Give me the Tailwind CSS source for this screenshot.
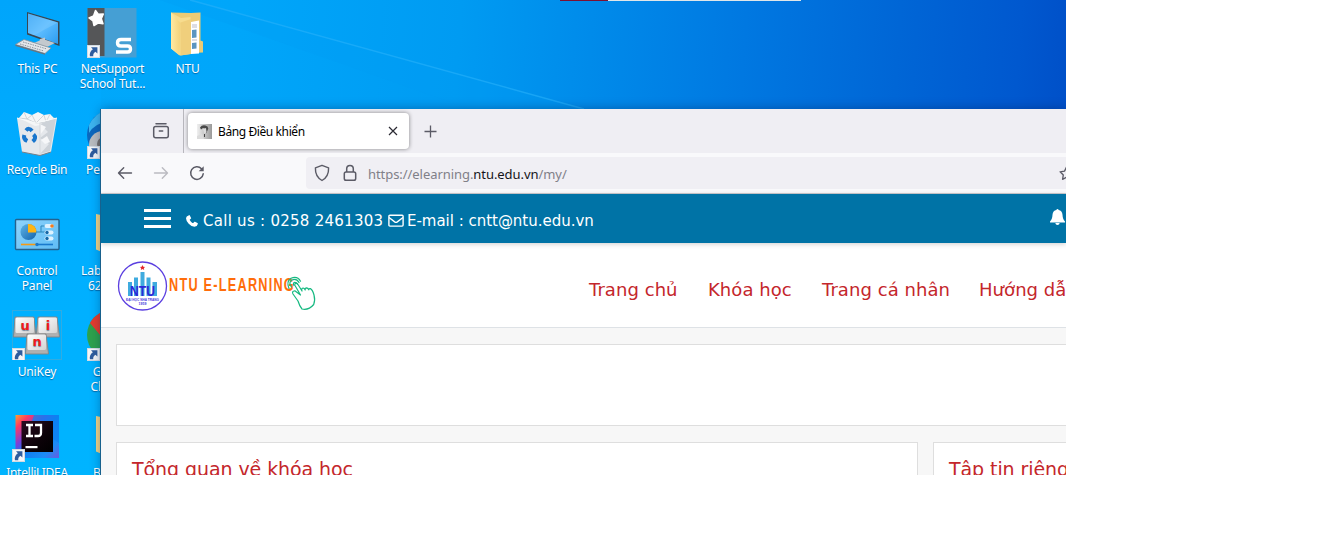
<!DOCTYPE html>
<html lang="vi">
<head>
<meta charset="utf-8">
<title>Bảng Điều khiển</title>
<script src="https://cdn.jsdelivr.net/npm/@tailwindcss/browser@4"></script>
</head>
<body class="bg-white w-[1338px] h-[548px] overflow-hidden">
<svg class="absolute" width="0" height="0">
  <defs>
    <linearGradient id="scr" x1="0" y1="0" x2="1" y2="1"><stop offset="0" stop-color="#2f9ff2"/><stop offset=".5" stop-color="#5cbcff"/><stop offset="1" stop-color="#2b9cf0"/></linearGradient>
    <linearGradient id="fold" x1="0" y1="0" x2="1" y2="0"><stop offset="0" stop-color="#ffe9a2"/><stop offset="1" stop-color="#f3d27a"/></linearGradient>
    <linearGradient id="cp" x1="0" y1="0" x2="1" y2="1"><stop offset="0" stop-color="#8fd3fb"/><stop offset="1" stop-color="#5fbdf5"/></linearGradient>
    <linearGradient id="pie" x1="0" y1="0" x2="1" y2="1"><stop offset="0" stop-color="#5fb4e6"/><stop offset="1" stop-color="#1263ad"/></linearGradient>
    <linearGradient id="ij" x1="0" y1="0" x2="1" y2="1"><stop offset="0" stop-color="#ffa02e"/><stop offset=".16" stop-color="#fe3a62"/><stop offset=".36" stop-color="#7b3fd8"/><stop offset=".5" stop-color="#0a7cf0"/><stop offset=".8" stop-color="#1c8cf5"/><stop offset="1" stop-color="#6a5ae0"/></linearGradient>
    <linearGradient id="ijb" x1="0" y1="0" x2="1" y2="1"><stop offset="0" stop-color="#2a0a22"/><stop offset=".6" stop-color="#0c0208"/><stop offset="1" stop-color="#000"/></linearGradient>
    <linearGradient id="key" x1="0" y1="0" x2="1" y2="1"><stop offset="0" stop-color="#fff"/><stop offset="1" stop-color="#d4d4d4"/></linearGradient>
    <linearGradient id="fav" x1="0" y1="0" x2="1" y2="0"><stop offset="0" stop-color="#f0f0f0"/><stop offset="1" stop-color="#9a9a9a"/></linearGradient>
    <symbol id="shortcut" viewBox="0 0 13 13"><rect width="13" height="13" fill="#f4f6f8"/><rect x=".5" y=".5" width="12" height="12" fill="none" stroke="#d3dbe2"/><path d="M4 2.300h6.400v6.300L8.400 6.700C6.600 8 6 9.300 6.300 11.200H2.900C2.300 8.400 3.600 5.800 5.900 4.200z" fill="#2f5d9e"/></symbol>
  </defs>
</svg>

<main class="relative w-[1066px] h-[475px] overflow-hidden bg-[#00acfb] font-['Noto_Sans',sans-serif]">
  <!-- wallpaper -->
  <div class="absolute inset-0 bg-[linear-gradient(94deg,#00a9fb_0%,#00a6fa_22%,#009bf2_42%,#008bea_54%,#0078e1_68%,#0066d6_82%,#0058cf_93%,#004cc5_100%)]"></div>
  <div class="absolute inset-y-0 left-0 w-[101px] bg-[linear-gradient(180deg,#00a5fb_0%,#00adff_40%,#00b4ff_100%)]"></div>
  <svg class="absolute left-0 top-0" width="620" height="109" viewBox="0 0 620 109"><path d="M190 0L582 109H470L160 0z" fill="#009cf3" opacity=".25"/><path d="M190 0L584 109" stroke="#28b2fb" stroke-width="1.600" opacity=".6"/></svg>
  <div class="absolute left-[560px] top-0 flex h-px w-[241px] bg-[#dfe6e9]"><div class="w-[48px] bg-[#7c1032]"></div></div>

  <!-- desktop icons -->
  <div class="absolute left-0 top-[8px] w-[74px] flex flex-col items-center gap-[3px] text-white text-[12px] tracking-[-0.12px] leading-[15px] text-center whitespace-nowrap [text-shadow:0_1px_1px_rgba(0,40,90,.5)]">
    <svg width="50" height="50" viewBox="0 0 50 50"><path d="M15 4L47.500 13.500V38L15 26.500z" fill="#3a4650"/><path d="M16 5.500L46 14.500V36L16 25z" fill="url(#scr)"/><path d="M16 5.500L46 14.500L22 27.200L16 25z" fill="#8cd0ff" opacity=".35"/><path d="M28 31l5-1.500v3l-6 2zM22 35l9-4l12 4l-8 4z" fill="#c3c9ce"/><path d="M3.500 36.500L12 31.500L39 40L33 45.500z" fill="#e4e7ea" stroke="#87919a" stroke-width=".8"/><path d="M8 36l24 7M11 34l24 7" stroke="#8a949d" stroke-width="1" stroke-dasharray="1.500 1"/><path d="M3.500 36.500L33 45.500v1.300L3.500 38z" fill="#69747d"/></svg>
    <span class="pl-px">This PC</span>
  </div>
  <div class="absolute left-[75px] top-[8px] w-[75px] flex flex-col items-center gap-[3px] text-white text-[12px] tracking-[-0.2px] leading-[15px] text-center whitespace-nowrap [text-shadow:0_1px_1px_rgba(0,40,90,.5)]">
    <svg class="-ml-px" width="50" height="50" viewBox="0 0 50 50"><rect x=".5" width="49" height="49.500" fill="#459fd4"/><rect x=".5" width="17" height="48" fill="#555658"/><path d="M8.500 2.500l2.800 3.800 5-.3-2 4.700 1.700 5-5-.7-4 2.500-1-4.500-4-3 4.500-2z" fill="#fff" stroke="#fff" stroke-width="1.500" stroke-linejoin="round"/><path d="M44 31.500H34q-3.500 0-3.500 3.200t3.500 3.300h6.500q3 0 3 3t-3 3H29" fill="none" stroke="#fff" stroke-width="3.400"/><use href="#shortcut" x="0" y="37" width="13" height="13"/></svg>
    <span>NetSupport<br>School Tut...</span>
  </div>
  <div class="absolute left-[150px] top-[8px] w-[74px] flex flex-col items-center gap-[3px] text-white text-[12px] tracking-[-0.12px] leading-[15px] text-center whitespace-nowrap [text-shadow:0_1px_1px_rgba(0,40,90,.5)]">
    <svg width="50" height="50" viewBox="0 0 50 50"><path d="M9 4.500l20 .5 9.500-.5v28l2.500 1v11L28 45z" fill="#eccb75"/><path d="M29 14l8-1.500v33L29 46z" fill="#fff"/><path d="M30 22l4.500-.6v8l-4.500.6zM30 35l4.500-.5v6l-4.500.5z" fill="#5b95c0"/><path d="M30 17h5M30 19h5M30 32h5" stroke="#aab" stroke-width=".8"/><path d="M9 4.500L19 10l9.500-1v37L18 47.500 9 40.500z" fill="#f7dc8f"/><path d="M9 4.500l9.500 10.500L17.500 47.500 9 40.500z" fill="url(#fold)"/><path d="M18.500 14.500L29 11v35l-10.500 1.500z" fill="#f0cf7c"/></svg>
    <span class="pl-px">NTU</span>
  </div>
  <div class="absolute left-0 top-[109px] w-[74px] flex flex-col items-center gap-[3px] text-white text-[12px] tracking-[-0.25px] leading-[15px] text-center whitespace-nowrap [text-shadow:0_1px_1px_rgba(0,40,90,.5)]">
    <svg width="50" height="50" viewBox="0 0 50 50"><path d="M5 9L24 13L45 9L39 43L28 46.500L10 43z" fill="#e5e8ec"/><path d="M7 9l5-6 8 3 6-3 6 3 6-1 5 5-8 5-12 2z" fill="#f5f6f7"/><path d="M12 3l3 7 5-4 4 8 8-8 2 7 4-8M7 9l8 1 9 4 11-1 8-4" fill="none" stroke="#c6cbd1" stroke-width=".8"/><path d="M28 15l8 8-8 6 9 6-9 10 10-3 6-33z" fill="#cdd2d8"/><path d="M28 15l6 3-6 8zM29 31l6-4 3 6-5 2z" fill="#f6f7f9"/><path d="M28 14v32" stroke="#d4d8dc"/><path d="M5 9l19 5 21-5" fill="none" stroke="#f8fafb"/><g fill="none" stroke="#1976cd" stroke-width="4"><path d="M14 21.500q3-3.500 6 .5"/><path d="M12.300 26q-1.300 4 3 6"/><path d="M21.500 25.500q3.500 3.500-.8 7"/></g><path d="M10 43l18 3.500 11-3.500" fill="none" stroke="#777f88" stroke-width="1"/></svg>
    <span>Recycle Bin</span>
  </div>
  <div class="absolute left-0 top-[210px] w-[74px] flex flex-col items-center gap-[3px] text-white text-[12px] tracking-[-0.12px] leading-[15px] text-center whitespace-nowrap [text-shadow:0_1px_1px_rgba(0,40,90,.5)]">
    <svg width="50" height="50" viewBox="0 0 50 50"><rect x="3.500" y="9.500" width="43.500" height="30" rx="1" fill="url(#cp)" stroke="#24628e" stroke-width="1.400"/><circle cx="16.500" cy="22" r="8" fill="url(#pie)"/><path d="M16 22.500V14a8 8 0 0 1 8.500 8.500z" fill="#ffb412"/><path d="M24 22h5v-6h5M29 22h4" fill="none" stroke="#2b87bd"/><rect x="32.500" y="14" width="9" height="4" rx="2" fill="#ddf2ff"/><circle cx="40" cy="16" r="1.800" fill="#f47c20"/><rect x="32.500" y="20.500" width="9" height="4" rx="2" fill="#ddf2ff"/><circle cx="35" cy="22.500" r="1.700" fill="#1569a9"/><rect x="32.500" y="26.500" width="9" height="4" rx="2" fill="#ddf2ff"/><circle cx="35" cy="28.500" r="1.700" fill="#1569a9"/><path d="M9 34.500h16" stroke="#f59b14" stroke-width="1.600"/><path d="M25 34.500h16" stroke="#1979cd" stroke-width="1.600"/><circle cx="25" cy="34.500" r="1.700" fill="#1979cd"/></svg>
    <span>Control<br>Panel</span>
  </div>
  <div class="absolute left-0 top-[310px] w-[74px] flex flex-col items-center gap-[4px] text-white text-[12px] tracking-[-0.12px] leading-[15px] text-center whitespace-nowrap [text-shadow:0_1px_1px_rgba(0,40,90,.5)]">
    <svg width="50" height="50" viewBox="0 0 50 50" font-family="'DejaVu Sans'" font-weight="700" font-size="13" fill="#f11a1a" text-anchor="middle"><rect x=".5" y=".5" width="49" height="49" fill="none" stroke="#5aa7c9" stroke-opacity=".55"/><g stroke="#858585" stroke-width=".9"><path d="M3 7h19l2 20H1.500z" fill="#b0b0b0"/><path d="M26 7h19l2.500 20H24z" fill="#b0b0b0"/><rect x="3.500" y="7.500" width="18.500" height="15.500" rx="1.500" fill="url(#key)" stroke="none"/><rect x="26.500" y="7.500" width="18.500" height="15.500" rx="1.500" fill="url(#key)" stroke="none"/><path d="M15 24h19l2.500 20H13.500z" fill="#b0b0b0"/><rect x="15.500" y="24.500" width="18.500" height="15.500" rx="1.500" fill="url(#key)" stroke="none"/></g><text x="13" y="19.500">u</text><text x="36" y="19.500">i</text><text x="25" y="36">n</text><use href="#shortcut" x="0" y="38" width="13" height="13"/></svg>
    <span>UniKey</span>
  </div>
  <div class="absolute left-0 top-[412px] w-[74px] flex flex-col items-center gap-[3px] text-white text-[12px] tracking-[-0.3px] leading-[15px] text-center whitespace-nowrap [text-shadow:0_1px_1px_rgba(0,40,90,.5)]">
    <svg width="50" height="50" viewBox="0 0 50 50"><rect x="3.500" y="3" width="43.500" height="43" fill="url(#ij)"/><path d="M22 3h25v28l-6-4V9H20z" fill="#0d83f2" opacity=".75"/><rect x="9.500" y="9" width="31.500" height="31" fill="url(#ijb)"/><path d="M14 13h7M17.500 13v11M14 24h7M23 13h6v8q0 3-3 3h-3.500" fill="none" stroke="#fff" stroke-width="2.300"/><rect x="13.500" y="34" width="12" height="2.200" fill="#fff"/><use href="#shortcut" x="0" y="37" width="13" height="13"/></svg>
    <span>IntelliJ IDEA</span>
  </div>
  <!-- icons partly covered by the browser window -->
  <div class="absolute left-[75px] top-[109px] w-[74px] flex flex-col items-center gap-[3px] text-white text-[12px] leading-[15px] whitespace-nowrap [text-shadow:0_1px_1px_rgba(0,40,90,.5)]">
    <svg width="50" height="50" viewBox="0 0 50 50"><circle cx="25" cy="26" r="25" fill="#0b67bd"/><path d="M2 16Q8 4 20 1v12Q8 14 2 24z" fill="#3db4ef"/><circle cx="16" cy="36" r="14" fill="#b9bcbf"/><circle cx="17" cy="35" r="7" fill="#76706c"/><use href="#shortcut" x="0" y="37" width="13" height="13"/></svg>
    <span class="w-[52px]">Peazip</span>
  </div>
  <div class="absolute left-[81px] top-[210px] w-[69px] flex flex-col gap-[3px] text-white text-[12px] leading-[15px] whitespace-nowrap [text-shadow:0_1px_1px_rgba(0,40,90,.5)]">
    <svg width="50" height="50" viewBox="0 0 50 50"><path d="M15 4l20 4v40L15 39.500z" fill="#f0d487"/></svg>
    <span>Lab 1<br><span class="pl-[7px]">6213</span></span>
  </div>
  <div class="absolute left-[75px] top-[311px] w-[74px] flex flex-col items-center gap-[3px] text-white text-[12px] leading-[15px] text-center whitespace-nowrap [text-shadow:0_1px_1px_rgba(0,40,90,.5)]">
    <svg width="50" height="50" viewBox="0 0 50 50"><circle cx="25" cy="24" r="25" fill="#2da14c"/><path d="M3 12A25 25 0 0 1 25-1V24H13z" fill="#e33b2e"/><circle cx="25" cy="24" r="11" fill="#fff"/><use href="#shortcut" x="0" y="37" width="13" height="13"/></svg>
    <span class="pl-[2px]">Google<br>Chrome</span>
  </div>
  <div class="absolute left-[81px] top-[412px] w-[69px] flex flex-col gap-[3px] text-white text-[12px] leading-[15px] whitespace-nowrap [text-shadow:0_1px_1px_rgba(0,40,90,.5)]">
    <svg width="50" height="50" viewBox="0 0 50 50"><path d="M15 4l20 4v40L15 39.500z" fill="#f0d487"/></svg>
    <span class="pl-[12px]">Bai tap</span>
  </div>

  <!-- browser window -->
  <section class="absolute left-[101px] top-[109px] w-[965px] h-[366px] overflow-hidden flex flex-col bg-[#f7f7f7] shadow-[-1px_0_0_#18618d,0_0_10px_rgba(0,30,80,.4)]">
    <div class="h-[44px] shrink-0 flex bg-[#efeef3] text-[#15141a]">
      <div class="w-[83px] border-r border-[#b8b7bd] flex items-center pl-[51px]">
        <svg width="18" height="18" viewBox="0 0 18 18" fill="none" stroke="#5b5b66" stroke-width="1.500" stroke-linecap="round"><path d="M4 1.700h10"/><rect x="1.700" y="4.600" width="14.600" height="11.200" rx="2"/><path d="M7.300 9h3.400"/></svg>
      </div>
      <div class="ml-[4px] mt-[4px] w-[221px] h-[36px] rounded bg-white shadow-[0_0_4px_rgba(0,0,0,.45)] flex items-center pl-[9px] pr-[11px]">
        <svg class="mt-px" width="15" height="15" viewBox="0 0 15 15"><rect width="15" height="15" fill="url(#fav)"/><path d="M3 3.500q2-3 5.500-2l2 1 .8 2-.8 2-1.500 3-.5-4.500-2.500-1-2 1.500z" fill="#4a4a4a"/><path d="M6 5l3-1 .5 4-2 2z" fill="#ddd"/><path d="M0 12l5-2 2 5H0z" fill="#dcdcdc"/><path d="M7.500 10v3" stroke="#444"/></svg>
        <span class="ml-[6px] mt-[2px] w-[100px] text-[12px] leading-[16px] tracking-[-0.45px] whitespace-nowrap text-black"><span class="tracking-[-0.4px]">Bảng Điều khiển</span></span>
        <svg class="ml-auto" width="10" height="10" viewBox="0 0 10 10" stroke="#2b2a33" stroke-width="1.200"><path d="M1 1l8 8M9 1L1 9"/></svg>
      </div>
      <div class="flex items-center pl-[15px]"><svg width="13" height="13" viewBox="0 0 13 13" stroke="#5b5b66" stroke-width="1.300"><path d="M6.500 .5v12M.5 6.500h12"/></svg></div>
    </div>
    <div class="h-[41px] shrink-0 flex items-center bg-[#f9f9fb] border-b border-[#ccccd0]">
      <svg class="ml-[16px]" width="16" height="16" viewBox="0 0 16 16" fill="none" stroke="#5b5b66" stroke-width="1.400" stroke-linecap="round" stroke-linejoin="round"><path d="M14.500 8H1.700M6.700 2.800L1.500 8l5.200 5.200"/></svg>
      <svg class="ml-[20px]" width="16" height="16" viewBox="0 0 16 16" fill="none" stroke="#bbbbc1" stroke-width="1.400" stroke-linecap="round" stroke-linejoin="round"><path d="M1.500 8h12.800M9.300 2.800L14.500 8l-5.200 5.200"/></svg>
      <svg class="ml-[20px]" width="16" height="16" viewBox="0 0 16 16" fill="none" stroke="#5b5b66" stroke-width="1.500" stroke-linecap="round"><path d="M14.200 8.800A6.300 6.300 0 1 1 12.500 3.700"/><path d="M14.700 1.200v5h-5z" fill="#5b5b66" stroke="none"/></svg>
      <div class="ml-[101px] h-[32px] flex-1 rounded-l bg-[#f0eff4] flex items-center">
        <svg class="ml-[8px]" width="16" height="18" viewBox="0 0 16 18" fill="none" stroke="#5b5b66" stroke-width="1.400" stroke-linejoin="round"><path d="M8 1.300l6.600 2.500c.2 5.700-1 9.700-6.600 12.700C2.400 13.500 1.200 9.500 1.400 3.800z"/></svg>
        <svg class="ml-[13px]" width="14" height="18" viewBox="0 0 14 18" fill="none" stroke="#5b5b66" stroke-width="1.500"><rect x="1.300" y="8" width="11.400" height="8.200" rx="1.800"/><path d="M3.700 8V4.700a3.300 3.300 0 0 1 6.600 0V8"/></svg>
        <span class="ml-[11px] mt-[2px] text-[13px] tracking-[-0.06px] leading-[20px] text-[#808088] whitespace-nowrap">https://elearning.<span class="text-[#15141a]">ntu.edu.vn</span>/my/</span>
        <svg class="ml-auto -mr-[8px] shrink-0" width="15" height="15" viewBox="0 0 16 16" fill="none" stroke="#5b5b66" stroke-width="1.400" stroke-linejoin="round"><path d="M8 1.200l2.100 4.300 4.700.7-3.400 3.300.8 4.700L8 12l-4.200 2.200.8-4.700L1.200 6.200l4.700-.7z"/></svg>
      </div>
    </div>

    <header class="relative z-10 h-[49px] shrink-0 flex items-center bg-[#0073a6] pt-[4px] pl-[43px] text-white font-['DejaVu_Sans',sans-serif] text-[15px] whitespace-nowrap shadow-[0_1px_5px_rgba(0,0,0,.2)]">
      <div class="w-[27px] -mt-[5px] flex flex-col gap-[5px]"><i class="h-[3px] bg-white"></i><i class="h-[3px] bg-white"></i><i class="h-[3px] bg-white"></i></div>
      <svg class="ml-[15px]" width="12" height="12" viewBox="0 0 12 12" fill="#fff"><path d="M3 .2q.5-.3.8.3l1.300 2.400q.2.500-.3.900l-.9.700q-.3.300 0 .8.900 1.600 2.500 2.600.5.400.9 0l.8-1q.4-.4.900-.1l2.400 1.300q.6.300.4.900-.5 2.700-3.300 2.800Q5.500 11.700 2.700 8.700 0 5.700 0 3.200 0 1.300 3 .2z"/></svg>
      <span class="ml-[5px] mt-px w-[181px] tracking-[0.27px]">Call us : 0258 2461303</span>
      <svg class="ml-[4px]" width="16" height="13" viewBox="0 0 16 13" fill="none" stroke="#fff" stroke-width="1.400"><rect x=".9" y="1.200" width="14.200" height="10.900" rx="1"/><path d="M1 3.500l5.700 4.400q1.300.9 2.600 0L15 3.500"/></svg>
      <span class="ml-[3px] mt-px tracking-[-0.02px]">E-mail : cntt@ntu.edu.vn</span>
      <svg class="ml-auto mr-[1px] -mt-[7px]" width="15" height="16" viewBox="0 0 15 16" fill="#fff"><path d="M7.500 0q1 0 1.100 1.100 3.600.7 3.900 4.700.2 4.700 2.500 6.700v1H0v-1q2.300-2 2.500-6.700.3-4 3.900-4.700Q6.500 0 7.500 0zM5.300 14h4.400q-.3 2-2.200 2t-2.200-2z"/></svg>
    </header>

    <nav class="h-[85px] shrink-0 flex items-center bg-white border-b border-[#dee2e6] text-[#c4262b] font-['DejaVu_Sans',sans-serif] whitespace-nowrap">
      <svg class="ml-[16px] mt-px shrink-0" width="202" height="52" viewBox="0 0 202 52">
        <circle cx="25.500" cy="26" r="24" fill="#fff" stroke="#5b3fe0" stroke-width="1.300"/>
        <path d="M25.500 5l.8 1.700 1.900.2-1.400 1.200.4 1.900-1.700-1-1.700 1 .4-1.900-1.400-1.200 1.900-.2z" fill="#e3262b"/>
        <path d="M11 22h4v14h-4zM17 17.500h4V36h-4zM23.500 12h4v24h-4zM29.500 17.500h4V36h-4zM35.500 22h4.500v14h-4.500z" fill="#3fabdf"/>
        <text x="25.500" y="36" font-family="'Liberation Sans'" font-size="14" font-weight="700" fill="#2d29d8" text-anchor="middle" textLength="25" lengthAdjust="spacingAndGlyphs">NTU</text>
        <text x="25.500" y="41" font-family="'Liberation Sans'" font-size="4" font-weight="700" fill="#4a3bdc" text-anchor="middle" textLength="33" lengthAdjust="spacingAndGlyphs">ĐẠI HỌC NHA TRANG</text>
        <text x="25.500" y="45" font-family="'Liberation Sans'" font-size="3.500" font-weight="700" fill="#4a3bdc" text-anchor="middle">1959</text>
        <text x="52" y="31" font-family="'Liberation Sans'" font-size="18.500" font-weight="700" fill="#ff6d0a" textLength="126" lengthAdjust="spacingAndGlyphs" letter-spacing="1.800">NTU E-LEARNING</text>
        <g fill="none" stroke="#16b981" stroke-width="1.200" stroke-linejoin="round" stroke-linecap="round"><path d="M181 41l-5-7q-1.200-2.500 1-3 1.300-.2 2.500 1l4 3-5.500-9.500q-.7-2 1-2.300 1.200-.1 2 1.300l4 6.500q-1-2.500 1-3 1.300-.1 2.200 2-.3-2 1.300-2.200 1.500 0 2.300 2 .3-1.600 1.600-1.200 2.200 1.200 3.600 6.400 1.400 5.500-.3 9.500-5 6-11.700 4.500Q182.500 46 181 41z" fill="#fff"/><path d="M174.500 27q-3.500-4.500.5-7 4.500-2 7 2.500M172 28.500q-3-7 2-10.300 6.500-2.500 9.500 3M177 25.500q-1.500-2.500.8-3.200 1.800 0 2.700 2"/></g>
      </svg>
      <div class="ml-[270px] mt-[9px] flex gap-[30px] text-[18px] tracking-[0.06px]"><span class="w-[89px]">Trang chủ</span><span class="w-[84px]">Khóa học</span><span class="w-[128px]">Trang cá nhân</span><span class="-ml-px">Hướng dẫn</span></div>
    </nav>

    <div class="grow p-[16px] pl-[15px] pr-0 flex flex-col gap-[16px] text-[#c4262b] font-['DejaVu_Sans',sans-serif] text-[19px] tracking-[-0.08px] whitespace-nowrap">
      <div class="h-[82px] shrink-0 bg-white border border-r-0 border-[#dedede]"></div>
      <div class="flex gap-[15px]">
        <div class="w-[802px] h-[60px] shrink-0 bg-white border border-[#dedede] pl-[15px] pt-[12px] leading-[28px]">Tổng quan về khóa học</div>
        <div class="w-[300px] h-[60px] shrink-0 bg-white border border-[#dedede] pl-[15px] pt-[12px] leading-[28px]">Tập tin riêng tư</div>
      </div>
    </div>
  </section>
</main>
</body>
</html>
